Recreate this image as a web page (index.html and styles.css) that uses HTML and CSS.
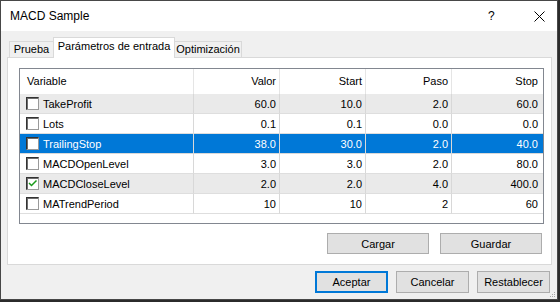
FILE: index.html
```html
<!DOCTYPE html>
<html lang="es">
<head>
    <meta charset="UTF-8">
    <title>MACD Sample</title>
    <link rel="stylesheet" href="styles.css">
</head>
<body>
    <div class="window">
        <div class="titlebar">
            <span class="title">MACD Sample</span>
            <span class="help">?</span>
            <svg class="close" width="11" height="11" viewBox="0 0 11 11">
                <path d="M0.5 0.5 L10.5 10.5 M10.5 0.5 L0.5 10.5" stroke="#000" stroke-width="1"/>
            </svg>
        </div>

        <div class="dialog">
            <div class="tabs">
                <div class="tab tab-prueba">Prueba</div>
                <div class="tab tab-params active">Parámetros de entrada</div>
                <div class="tab tab-opt">Optimización</div>
            </div>

            <div class="panel">
                <div class="listview">
                    <div class="lv-row lv-header">
                        <div class="cell left">Variable</div>
                        <div class="cell">Valor</div>
                        <div class="cell">Start</div>
                        <div class="cell">Paso</div>
                        <div class="cell last">Stop</div>
                    </div>
                    <div class="lv-row shaded">
                        <div class="cell left"><span class="check"></span>TakeProfit</div>
                        <div class="cell">60.0</div>
                        <div class="cell">10.0</div>
                        <div class="cell">2.0</div>
                        <div class="cell last">60.0</div>
                    </div>
                    <div class="lv-row">
                        <div class="cell left"><span class="check"></span>Lots</div>
                        <div class="cell">0.1</div>
                        <div class="cell">0.1</div>
                        <div class="cell">0.0</div>
                        <div class="cell last">0.0</div>
                    </div>
                    <div class="lv-row selected">
                        <div class="cell left"><span class="check"></span>TrailingStop</div>
                        <div class="cell">38.0</div>
                        <div class="cell">30.0</div>
                        <div class="cell">2.0</div>
                        <div class="cell last">40.0</div>
                    </div>
                    <div class="lv-row">
                        <div class="cell left"><span class="check"></span>MACDOpenLevel</div>
                        <div class="cell">3.0</div>
                        <div class="cell">3.0</div>
                        <div class="cell">2.0</div>
                        <div class="cell last">80.0</div>
                    </div>
                    <div class="lv-row shaded">
                        <div class="cell left">
                            <span class="check checked">
                                <svg width="11" height="11" viewBox="0 0 11 11">
                                    <path d="M2 5 L4.5 7.5 L9.5 2.5" stroke="#1a9a1a" stroke-width="1.5" fill="none"/>
                                </svg>
                            </span>MACDCloseLevel
                        </div>
                        <div class="cell">2.0</div>
                        <div class="cell">2.0</div>
                        <div class="cell">4.0</div>
                        <div class="cell last">400.0</div>
                    </div>
                    <div class="lv-row">
                        <div class="cell left"><span class="check"></span>MATrendPeriod</div>
                        <div class="cell">10</div>
                        <div class="cell">10</div>
                        <div class="cell">2</div>
                        <div class="cell last">60</div>
                    </div>
                </div>

                <div class="panel-buttons">
                    <button class="btn btn-wide">Cargar</button>
                    <button class="btn btn-wide">Guardar</button>
                </div>
            </div>

            <div class="dialog-buttons">
                <button class="btn default">Aceptar</button>
                <button class="btn">Cancelar</button>
                <button class="btn">Restablecer</button>
            </div>
        </div>

        <!-- size grip -->
        <svg class="grip" width="7" height="7" viewBox="0 0 7 7">
            <rect x="5" y="1" width="1" height="1" fill="#a8a8a8"/>
            <rect x="3" y="3" width="1" height="1" fill="#a8a8a8"/>
            <rect x="5" y="3" width="1" height="1" fill="#a8a8a8"/>
            <rect x="1" y="5" width="1" height="1" fill="#a8a8a8"/>
            <rect x="3" y="5" width="1" height="1" fill="#a8a8a8"/>
            <rect x="5" y="5" width="1" height="1" fill="#a8a8a8"/>
        </svg>
    </div>
</body>
</html>
```

FILE: styles.css
```css
* {
    margin: 0;
    padding: 0;
    box-sizing: border-box;
    font-family: 'Liberation Sans', Arial, sans-serif;
}

body {
    background: #2b2b2b;
    width: 560px;
    height: 302px;
    overflow: hidden;
}

.window {
    position: relative;
    width: 558px;
    height: 300px;
    border: 1px solid #474747;
    background: #f0f0f0;
    display: flex;
    flex-direction: column;
}

/* Title bar */
.titlebar {
    height: 30px;
    background: #fff;
    display: flex;
    align-items: center;
    color: #000;
}

.title {
    padding-left: 9px;
    font-size: 12px;
}

.help {
    margin-left: auto;
    font-size: 12px;
    width: 7px;
    margin-right: 39px;
}

.close {
    margin-right: 12px;
    margin-top: 1px;
}

/* Dialog body */
.dialog {
    flex: 1;
    padding: 6px 0 0 6px;
    font-size: 11px;
    color: #000;
}

.tabs {
    display: flex;
    align-items: flex-end;
    height: 20px;
    margin-left: 2px;
}

.tab {
    height: 16px;
    border: 1px solid #d9d9d9;
    border-bottom: none;
    background: #f0f0f0;
    text-align: center;
    line-height: 15px;
}

.tab-prueba { width: 45px; }
.tab-params { width: 122px; }
.tab-opt { width: 68px; margin-left: -1px; }

.tab.active {
    position: relative;
    z-index: 1;
    height: 21px;
    margin-bottom: -1px;
    margin-left: -1px;
    background: #fff;
    line-height: 17px;
}

.panel {
    width: 545px;
    height: 208px;
    background: #fff;
    border: 1px solid #d9d9d9;
    padding: 10px 0 0 11px;
}

/* List view */
.listview {
    width: 525px;
    height: 156px;
    border: 1px solid #828790;
    background: #fff;
}

.lv-row {
    display: grid;
    grid-template-columns: 174px 86px 86px 86px 1fr;
    height: 20px;
}

.cell {
    display: flex;
    align-items: center;
    justify-content: flex-end;
    padding-right: 3px;
    border-right: 1px solid #d8d8d8;
    border-bottom: 1px solid #dedede;
    white-space: nowrap;
}

.cell.left {
    justify-content: flex-start;
    padding-left: 6px;
}

.cell.last {
    border-right: none;
    padding-right: 5px;
}

.lv-header {
    height: 25px;
}

.lv-header .cell {
    border-bottom: none;
    border-right-color: #e5e5e5;
    padding-bottom: 1px;
}

.lv-header .cell.left {
    padding-left: 7px;
}

.shaded {
    background: #eaeaea;
}

.selected {
    background: #0078d7;
    color: #fff;
}

.selected .cell {
    border-color: #d8d8d8;
}

.check {
    width: 13px;
    height: 13px;
    margin-right: 4px;
    background: #fff;
    border: 1px solid;
    border-color: #333 #9a9a9a #9a9a9a #333;
    box-shadow: inset 1px 1px 0 #6d6d6d;
    display: flex;
    align-items: center;
    justify-content: center;
}

.check svg {
    display: block;
}

/* Buttons */
.panel-buttons {
    display: flex;
    justify-content: flex-end;
    gap: 11px;
    margin-top: 9px;
    padding-right: 9px;
}

.btn {
    width: 73px;
    height: 22px;
    background: #e1e1e1;
    border: 1px solid #adadad;
    font-size: 11px;
    color: #000;
    font-family: 'Liberation Sans', Arial, sans-serif;
}

.btn-wide {
    width: 102px;
    height: 21px;
}

.btn.default {
    border: 2px solid #0078d7;
}

.dialog-buttons {
    display: flex;
    justify-content: flex-end;
    gap: 8px;
    margin-top: 6px;
    padding-right: 7px;
}

.grip {
    position: absolute;
    right: 1px;
    bottom: 1px;
}
```
